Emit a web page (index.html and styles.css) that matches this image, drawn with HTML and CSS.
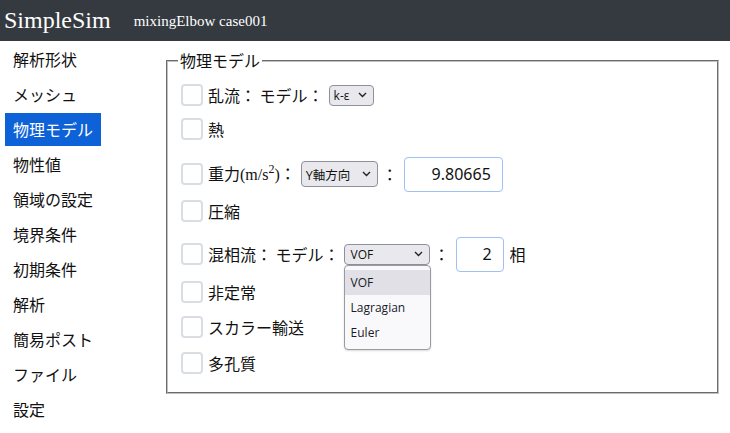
FILE: index.html
```html
<!DOCTYPE html>
<html lang="ja">
<head>
<meta charset="utf-8">
<title>SimpleSim</title>
<link rel="stylesheet" href="styles.css">
</head>
<body>
<header class="topbar">
  <span class="brand">SimpleSim</span>
  <span class="case">mixingElbow case001</span>
</header>
<div class="main">
  <nav class="side">
    <a class="nav-item">解析形状</a>
    <a class="nav-item">メッシュ</a>
    <a class="nav-item active">物理モデル</a>
    <a class="nav-item">物性値</a>
    <a class="nav-item">領域の設定</a>
    <a class="nav-item">境界条件</a>
    <a class="nav-item">初期条件</a>
    <a class="nav-item">解析</a>
    <a class="nav-item">簡易ポスト</a>
    <a class="nav-item">ファイル</a>
    <a class="nav-item">設定</a>
  </nav>
  <section class="content">
    <fieldset class="group">
      <legend class="legend">物理モデル</legend>
      <div class="row">
        <span class="check"></span>
        <span class="label">乱流： モデル：</span>
        <div class="select sel-ke"><span>k-ε</span><svg class="chev" width="9" height="6" viewBox="0 0 9 6"><path d="M1 1l3.5 3.5L8 1" fill="none" stroke="#222" stroke-width="1.4"/></svg></div>
      </div>
      <div class="row">
        <span class="check"></span>
        <span class="label">熱</span>
      </div>
      <div class="row tall">
        <span class="check"></span>
        <span class="label">重力<span class="serif">(m/s<sup>2</sup>)</span>：</span>
        <div class="select sel-dir"><span>Y軸方向</span><svg class="chev" width="9" height="6" viewBox="0 0 9 6"><path d="M1 1l3.5 3.5L8 1" fill="none" stroke="#222" stroke-width="1.4"/></svg></div>
        <span class="colon">：</span>
        <input class="num num-g" type="text" value="9.80665">
      </div>
      <div class="row">
        <span class="check"></span>
        <span class="label">圧縮</span>
      </div>
      <div class="row tall2">
        <span class="check"></span>
        <span class="label">混相流： モデル：</span>
        <div class="select-wrap">
          <div class="select sel-mp"><span>VOF</span><svg class="chev" width="9" height="6" viewBox="0 0 9 6"><path d="M1 1l3.5 3.5L8 1" fill="none" stroke="#222" stroke-width="1.4"/></svg></div>
          <ul class="popup">
            <li class="opt hi">VOF</li>
            <li class="opt">Lagragian</li>
            <li class="opt">Euler</li>
          </ul>
        </div>
        <span class="colon">：</span>
        <input class="num num-p" type="text" value="2">
        <span class="unit">相</span>
      </div>
      <div class="row">
        <span class="check"></span>
        <span class="label">非定常</span>
      </div>
      <div class="row step1">
        <span class="check"></span>
        <span class="label">スカラー輸送</span>
      </div>
      <div class="row step2">
        <span class="check"></span>
        <span class="label">多孔質</span>
      </div>
    </fieldset>
  </section>
</div>
</body>
</html>
```
FILE: styles.css
```css
html, body {
  margin: 0;
  padding: 0;
  background: #fff;
}
body {
  font-family: "Noto Sans CJK JP", "Noto Sans", sans-serif;
  font-size: 16px;
  color: #212529;
}
.topbar {
  height: 41px;
  background: #343a40;
  color: #fff;
  display: flex;
  align-items: center;
  font-family: "Liberation Serif", serif;
  padding-left: 4px;
}
.brand {
  font-size: 24px;
  line-height: 28px;
  margin-top: -1px;
}
.case {
  font-size: 15px;
  margin-left: 23px;
  margin-top: 1px;
}
.main {
  display: flex;
  align-items: flex-start;
}
.side {
  width: 96px;
  margin-left: 5px;
  padding-top: 2px;
  display: flex;
  flex-direction: column;
}
.nav-item {
  display: block;
  height: 33px;
  line-height: 33px;
  padding-left: 8px;
  margin-bottom: 2px;
  color: #111;
  white-space: nowrap;
}
.nav-item.active {
  background: #0e62d8;
  color: #fff;
}
.content {
  margin-left: 65px;
  width: 553px;
  padding-top: 8px;
}
.group {
  margin: 0;
  border: 2px groove #c0c0c0;
  padding: 6px 12px 12px 13px;
  min-width: 0;
}
.legend {
  padding: 0 2px;
  margin-left: -3px;
  line-height: 23px;
  color: #111;
}
.row {
  display: flex;
  align-items: center;
  height: 34px;
}
.row.tall {
  margin-top: 11px;
  margin-bottom: 3px;
}
.row.tall2 {
  margin-top: 9px;
  margin-bottom: 4px;
}
.row.step1 {
  margin-top: 1px;
}
.row.step2 {
  margin-top: 2px;
}
.check {
  width: 18px;
  height: 18px;
  border: 2px solid #d9dee4;
  border-radius: 4px;
  background: #fff;
  flex: none;
}
.label {
  margin-left: 5px;
  line-height: 22px;
  white-space: nowrap;
  color: #111;
}
.serif {
  font-family: "Liberation Serif", serif;
  font-size: 16px;
}
.serif sup {
  font-size: 12px;
  line-height: 0;
  vertical-align: 7px;
}
.select {
  display: flex;
  align-items: center;
  justify-content: space-between;
  box-sizing: border-box;
  background: #e9e9ed;
  border: 1px solid #8f8f9d;
  border-radius: 4px;
  font-family: "Open Sans", "Noto Sans CJK JP", sans-serif;
  font-size: 12px;
  color: #111;
  padding: 0 6px 0 4px;
}
.chev {
  flex: none;
}
.sel-ke {
  margin-left: 5px;
  width: 45px;
  height: 21px;
}
.sel-dir {
  margin-left: 5px;
  width: 77px;
  height: 26px;
  font-size: 12.5px;
}
.select-wrap {
  position: relative;
  margin-left: 4px;
}
.sel-mp {
  width: 86px;
  height: 21px;
  padding-left: 6px;
}
.popup {
  position: absolute;
  left: 0;
  top: 21px;
  width: 87px;
  box-sizing: border-box;
  margin: 0;
  padding: 4px 0;
  list-style: none;
  background: #f9f9fb;
  border: 1px solid #9a9aa2;
  border-radius: 4px;
  box-shadow: 0 1px 2px rgba(0,0,0,0.15);
  font-family: "Open Sans", sans-serif;
  font-size: 12px;
  color: #1a1a2a;
  z-index: 5;
}
.opt {
  height: 25px;
  line-height: 25px;
  padding-left: 6px;
}
.opt.hi {
  background: #e0e0e6;
}
.colon {
  width: 16px;
  text-align: center;
  margin-left: 4px;
  color: #111;
}
.num {
  box-sizing: border-box;
  height: 35px;
  margin-left: 6px;
  border: 1px solid #9ec0f2;
  border-radius: 4px;
  font-family: "Noto Sans", sans-serif;
  font-size: 16px;
  text-align: right;
  color: #111;
  padding: 0 11px 0 4px;
  background: #fff;
  outline: none;
}
.num-g {
  width: 99px;
}
.num-p {
  width: 48px;
}
.unit {
  margin-left: 6px;
  color: #111;
}
```
